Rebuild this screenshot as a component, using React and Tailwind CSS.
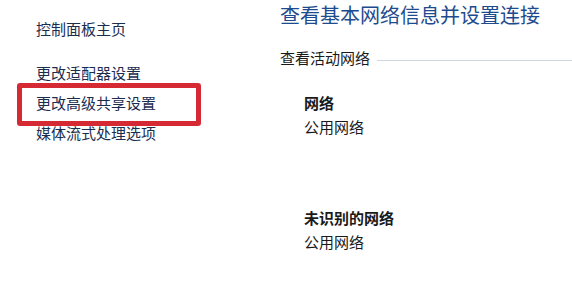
import React from 'react';

const navLinks = ['更改适配器设置', '更改高级共享设置', '媒体流式处理选项'];

const networks = [
  { name: '网络', type: '公用网络' },
  { name: '未识别的网络', type: '公用网络' },
];

const App = () => {
  return (
    <div
      className="flex w-[572px] h-[307px] bg-white overflow-hidden"
      style={{ fontFamily: '"Microsoft YaHei", "Noto Sans CJK SC", sans-serif' }}
    >
      {/* Left task pane */}
      <div className="w-[280px] shrink-0 pl-[36px] pt-[14px] text-[15px] leading-[30px] text-[#1b2d4f]">
        <div>控制面板主页</div>
        <div className="mt-[14px]">
          {navLinks.map((link, i) => (
            <div key={link} className="relative">
              {link}
              {i === 1 && (
                <span className="absolute left-[-19px] top-[-5px] w-[184px] h-[43px] border-[5px] border-[#d52a33] rounded-[3px]" />
              )}
            </div>
          ))}
        </div>
      </div>

      {/* Main content */}
      <div className="flex-1 pt-[3px]">
        <h1 className="text-[20px] leading-[24px] text-[#1e4b8e] font-normal">查看基本网络信息并设置连接</h1>

        <div className="flex items-center mt-[21px] text-[15px] leading-[20px] text-[#1a1a1a]">
          <span>查看活动网络</span>
          <div className="flex-1 h-px bg-[#cfd6de] ml-[7px] mt-[4px]" />
        </div>

        <div className="pl-[24px] text-[15px] leading-[24px] text-[#1a1a1a]">
          {networks.map((net, i) => (
            <div key={net.name} className={i === 0 ? 'mt-[23px]' : 'mt-[67px]'}>
              <div className="font-bold">{net.name}</div>
              <div>{net.type}</div>
            </div>
          ))}
        </div>
      </div>
    </div>
  );
};

export default App;
